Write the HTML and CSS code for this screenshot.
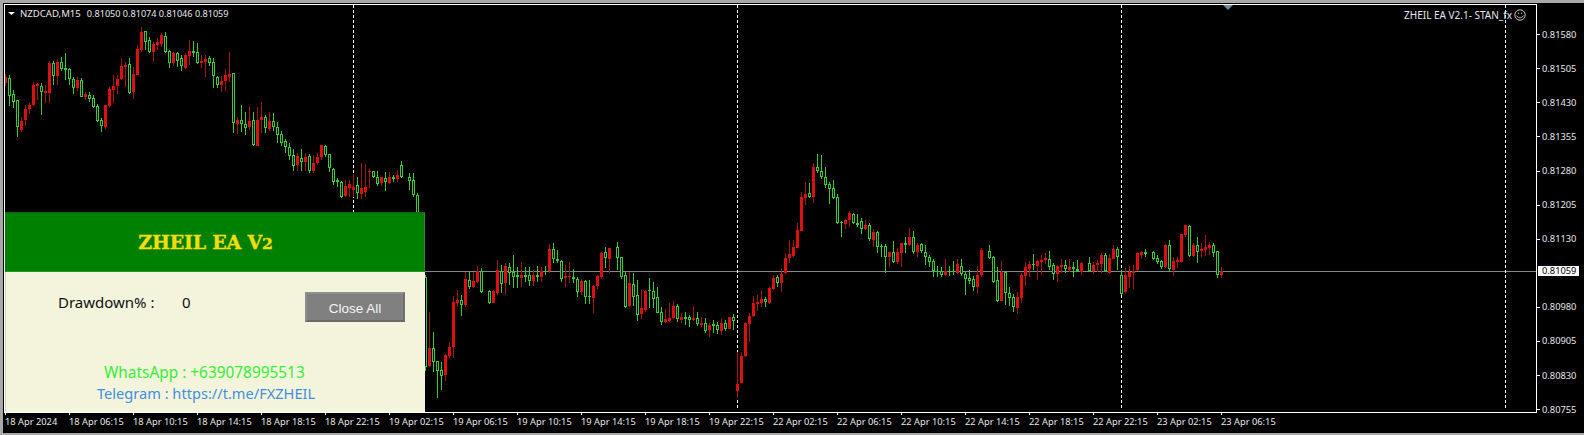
FILE: index.html
```html
<!DOCTYPE html>
<html lang="en">
<head>
<meta charset="utf-8">
<title>NZDCAD,M15 - ZHEIL EA V2</title>
<link rel="stylesheet" href="styles.css">
</head>
<body>
<main class="terminal">
  <div class="chart-row">
    <section class="plot">
      <svg class="candles" id="candles" viewBox="5 5 1531 407" width="1531" height="407" aria-label="Candlestick chart"></svg>
      <div class="legend">
        <svg class="legend-arrow" viewBox="0 0 7 3" width="7" height="3"><path d="M0 0H7L3.5 3Z"/></svg>
        <span class="legend-symbol">NZDCAD,M15</span>
        <span class="legend-ohlc">0.81050 0.81074 0.81046 0.81059</span>
      </div>
      <div class="expert">
        <span>ZHEIL EA V2.1- STAN_fx</span>
        <svg class="smiley" viewBox="0 0 12 12" width="12" height="12"><circle cx="6" cy="6" r="5.2"/><path d="M3.2 7.2C4.2 9.2 7.8 9.2 8.8 7.2M2.6 6.7 3.6 7.5M9.4 6.7 8.4 7.5"/><path d="M4.4 3.6V5M7.6 3.6V5"/></svg>
      </div>
      <svg class="shift-marker" viewBox="0 0 10 5" width="10" height="5"><path d="M0 0H10L5 5Z"/></svg>
      <aside class="panel">
        <header class="panel-head"><span>ZHEIL EA V<span class="oldstyle">2</span></span></header>
        <div class="panel-body">
          <div class="panel-row">
            <span class="dd-label">Drawdown% :</span>
            <span class="dd-value">0</span>
            <button class="close-all" type="button">Close All</button>
          </div>
          <p class="contact whatsapp">WhatsApp : +639078995513</p>
          <p class="contact telegram">Telegram : https://t.me/FXZHEIL</p>
        </div>
      </aside>
    </section>
    <div class="price-axis">
      <span class="price">0.81580</span>
      <span class="price">0.81505</span>
      <span class="price">0.81430</span>
      <span class="price">0.81355</span>
      <span class="price">0.81280</span>
      <span class="price">0.81205</span>
      <span class="price">0.81130</span>
      <span class="price current">0.81059</span>
      <span class="price">0.80980</span>
      <span class="price">0.80905</span>
      <span class="price">0.80830</span>
      <span class="price">0.80755</span>
    </div>
  </div>
  <div class="time-axis">
    <span class="time">18 Apr 2024</span>
    <span class="time">18 Apr 06:15</span>
    <span class="time">18 Apr 10:15</span>
    <span class="time">18 Apr 14:15</span>
    <span class="time">18 Apr 18:15</span>
    <span class="time">18 Apr 22:15</span>
    <span class="time">19 Apr 02:15</span>
    <span class="time">19 Apr 06:15</span>
    <span class="time">19 Apr 10:15</span>
    <span class="time">19 Apr 14:15</span>
    <span class="time">19 Apr 18:15</span>
    <span class="time">19 Apr 22:15</span>
    <span class="time">22 Apr 02:15</span>
    <span class="time">22 Apr 06:15</span>
    <span class="time">22 Apr 10:15</span>
    <span class="time">22 Apr 14:15</span>
    <span class="time">22 Apr 18:15</span>
    <span class="time">22 Apr 22:15</span>
    <span class="time">23 Apr 02:15</span>
    <span class="time">23 Apr 06:15</span>
  </div>
</main>
<script src="chart.js"></script>
</body>
</html>
```
FILE: styles.css
```css
* { box-sizing: border-box; }
html, body { margin: 0; height: 100%; background: #000; overflow: hidden; }
.terminal {
  width: 1584px;
  height: 435px;
  padding: 3px 0 2px 3px;
  background: #000;
  display: flex;
  flex-direction: column;
  box-shadow: inset 3px 3px 0 #a8a8a8, inset 0 -2px 0 #a8a8a8;
  font-family: "Noto Sans", sans-serif;
  color: #e8e8e8;
}
.chart-row { display: flex; height: 410px; padding-left: 1px; padding-top: 1px; }
.plot {
  position: relative;
  flex: none;
  width: 1533px;
  height: 409px;
  border: 1px solid #fff;
  background: #000;
}
.candles { display: block; shape-rendering: crispEdges; }
.price-line { fill: #808890; }
.grid-dash { stroke: #fff; stroke-width: 1; stroke-dasharray: 3 2; }
.wick-up, .body-up { fill: #32cd32; }
.wick-down { fill: #a81414; }
.body-down { fill: #dc1010; }
.body-hole { fill: #000; }
.legend {
  position: absolute; left: 3px; top: 2px;
  display: flex; align-items: center; height: 13px;
  line-height: 13px; white-space: nowrap;
}
.legend-arrow { fill: #fff; margin-right: 5px; }
.legend-symbol { margin-right: 6px; font-size: 9.6px; }
.legend-ohlc { font-size: 9.1px; }
.expert {
  position: absolute; right: 10px; top: 3px;
  display: flex; align-items: center; height: 14px;
  font-size: 10px; white-space: nowrap;
}
.smiley { margin-left: 2px; fill: none; stroke: #ddd; stroke-width: .9; }
.shift-marker { position: absolute; left: 1218px; top: 0; fill: #778899; }
.panel {
  position: absolute; left: 0; top: 207px;
  width: 420px; height: 200px;
  display: flex; flex-direction: column;
  background: #f4f4dc;
  border-left: 1px solid #d3d3c0;
}
.panel-head {
  height: 60px;
  display: flex; align-items: center; justify-content: center;
  background: #008000;
  border-top: 1px solid #0a6a0a;
  border-right: 1px solid #2a8a2a;
  border-bottom: 1px solid #1f9a1f;
  font-family: "DejaVu Serif", serif;
  font-weight: 700;
  font-size: 19px;
  letter-spacing: -.2px;
  -webkit-text-stroke: .35px #f4dc10;
  color: #f4dc10;
  margin-left: -1px;
  padding-right: 18px;
}
.oldstyle { font-size: .82em; }
.panel-body { flex: 1; padding: 19px 0 0; color: #111; }
.panel-row { display: flex; align-items: flex-start; padding-left: 52px; height: 31px; }
.dd-label { font-size: 15px; line-height: 22px; width: 124px; flex: none; white-space: nowrap; }
.dd-value { font-size: 15px; line-height: 22px; width: 123px; flex: none; }
.close-all {
  width: 100px; height: 30px; padding: 2px 0 0; margin-top: 1px;
  background: #808080; color: #f4f4f4;
  border: 2px solid #8f8f8f; border-bottom-color: #6a6a6a; border-right-color: #6f6f6f;
  font-family: "Liberation Sans", sans-serif; font-size: 13.5px;
}
.contact { margin: 0; line-height: 20px; white-space: nowrap; }
.whatsapp { margin-top: 41px; padding-left: 98px; color: #35ee35; font-size: 15.4px; }
.telegram { padding-left: 91px; color: #3f8fdc; font-size: 14.6px; }
.price-axis {
  flex: none; display: flex; flex-direction: column;
  padding-top: 13.2px; width: 47px;
}
.price {
  position: relative; display: flex; align-items: center;
  flex: none; height: 34.09px; padding-left: 5px;
  font-size: 9.3px; color: #e8e8e8;
}
.price::before { content: ""; position: absolute; left: 0; top: 50%; width: 3px; height: 1px; background: #fff; }
.price.current::before { display: none; }
.price.current { color: #000; margin-top: -2px; margin-bottom: 2px; background: linear-gradient(#fff, #fff) 1px center / 41px 10px no-repeat; }
.time-axis { display: flex; padding-left: 2px; height: 20px; }
.time {
  position: relative; flex: none; width: 64px; padding-top: 2px;
  font-size: 9.3px; line-height: 14px; white-space: nowrap; color: #e8e8e8;
}
.time::before { content: ""; position: absolute; left: 0; top: -1px; width: 1px; height: 3px; background: #fff; }
```
FILE: chart.js
```js
// Candles, read as: type, body top, body bottom, wick top, wick bottom (3x crop coordinates).
var SEGMENTS = [
 { start: 0, y0: 0, rows: "r232 250 222 258|g235 287 226 318|g283 305 270 325|g301 382 300 410|r362 390 350 395|r328 360 315 378|r316 328 308 342|r254 316 247 318|r252 258 248 300|g258 275 250 345|r272 278 255 308|r188 278 183 308|g190 227 182 255|r186 228 176 255|g186 207 172 212|g205 209 160 240|g208 236 205 255|g238 263 230 282|r240 263 232 272|g240 290 235 292|r282 292 275 300|g284 296 275 305|g295 322 285 325|g319 362 312 365|g361 378 355 395|r316 382 316 388|r268 318 262 320|r258 270 225 310|r236 258 225 282|r198 236 175 240|r195 200 185 260|g192 278 175 282|r222 276 200 298|r148 224 135 226|r96 150 82 155|g94 125 92 150|g120 156 112 158|r132 155 125 185|r126 134 115 150|r104 132 98 140|g108 156 97 160|g154 190 150 203|r160 190 155 198|g158 182 155 200|g175 198 165 212|r164 204 160 208|r154 168 120 195|g154 158 122 172|g156 190 130 192|r183 188 165 205|r178 186 165 232|g175 190 168 198|g185 228 175 265|g232 256 228 265|r243 256 228 276|r226 243 208 272|r222 231 156 245|g220 368 218 400|r360 372 350 402|g361 372 316 395|g373 383 335 405|r364 382 318 390|g360 436 335 438|r360 438 322 438|r352 360 306 400|g352 384 345 400|r362 386 335 392|g362 382 340 392|g380 404 365 430|g403 428 392 438|g424 442 418 460|g440 468 430 480|g466 497 448 512|r468 495 460 512|g475 485 448 512|r470 486 460 512|g468 514 462 518|r490 512 465 518|r470 490 460 495|r436 472 434 480|g438 466 436 470|g463 504 462 515|g508 546 503 555|g541 547 535 560|g547 590 543 594|r558 588 540 592|r552 565 540 590|r562 570 522 590|g556 580 530 596|r565 583 490 596|r560 576 492 590|r512 517 508 565|g514 530 512 535|g532 552 512 558|r532 550 530 558|g535 545 515 572|r532 550 516 552|g532 536 525 545|r526 538 510 545|g495 530 484 535|-|g530 542 518 570|g541 586 520 590|g586 660 580 660" },
 { start: 105, y0: 230, rows: "g140 410 135 422|r354 408 245 410|g354 395 305 425|g394 422 392 505|g420 437 395 480|r376 436 372 452|r350 378 335 385|r216 350 198 385|r211 218 180 232|g210 224 195 258|r148 226 125 232|g150 172 125 178|r154 172 125 175|r122 156 108 158|g122 185 115 188|-|g182 218 180 222|r182 218 180 220|r120 190 90 195|g122 162 105 188|r108 158 98 195|g112 128 100 165|g125 140 75 175|g135 140 110 175|r135 143 97 172|g135 140 110 155|g135 152 112 168|r135 152 120 168|g135 140 108 155|r122 140 110 155|g122 126 108 135|r58 122 42 130|g58 88 40 100|g88 92 60 100|g92 148 90 155|r138 143 105 170|r138 142 95 160|g140 148 118 158|g148 186 140 200|r152 186 148 195|g152 200 150 222|g198 202 150 222|r168 204 165 248|r138 168 135 178|r68 140 65 148|g67 83 50 115|r55 88 55 128|-|g52 83 37 120|g82 140 80 148|g136 232 125 235|r160 228 125 230|g162 200 130 228|g196 254 150 272|r235 252 180 268|r182 240 180 245|g180 184 145 235|g182 206 155 235|g202 248 170 250|g246 276 230 285|r268 276 238 278|r265 272 220 275|r228 264 212 266|g228 268 222 275|r262 270 248 280|g262 266 245 285|g260 270 255 292|r265 270 228 274|g265 282 245 288|r280 284 262 290|g278 304 265 308|r284 300 280 320|g283 288 270 310|g286 300 275 312|r280 302 268 315|g280 298 270 302|r262 297 260 298|g262 272 252 300|r462 482 365 503|r378 458 365 460|r278 378 276 380|r258 282 250 335|r220 258 198 262|r216 222 195 242|r208 218 180 232|g206 216 200 230|r174 218 172 222|r144 178 135 180|g142 158 135 170|r132 158 115 185|r84 130 68 132|r72 85 30 100|r52 78 30 82" },
 { start: 198, y0: 140, rows: "r270 323 250 325|r172 272 155 272|r163 173 125 195|g160 172 128 175|r82 172 68 188|g82 92 42 100|g92 112 45 118|g112 134 82 145|g133 146 125 192|g145 174 120 178|g172 248 162 252|g246 250 242 290|r240 252 236 268|r218 240 212 262|g221 248 218 252|g250 255 222 262|g244 268 235 282|r255 268 240 270|g256 298 250 302|r276 300 268 322|g276 320 272 338|g318 322 312 352|g319 350 312 398|r337 350 335 382|g337 366 304 370|r337 365 325 372|r310 338 308 380|g310 314 292 340|r292 315 265 318|g292 335 274 342|r316 335 310 352|g312 332 308 340|g335 352 315 375|g352 365 345 380|g362 392 358 410|g392 396 378 410|g394 404 380 412|r394 404 358 408|g392 396 378 408|g394 396 362 405|r372 400 358 402|g377 402 358 408|g402 416 395 465|g415 423 390 432|g418 442 408 452|r406 442 378 462|r330 406 325 410|-|g332 354 316 358|g352 426 348 428|g420 482 380 485|r396 482 362 484|g396 458 392 495|g458 474 440 498|g472 502 462 516|r472 504 455 522|r405 474 400 490|r380 407 365 438|r372 388 362 410|g372 376 342 390|r362 378 360 420|r360 366 345 405|r354 360 340 372|g358 380 332 390|g376 402 368 420|r378 402 375 425|r376 382 358 400|g376 388 360 398|r380 390 358 395|g381 388 365 412|g388 393 360 396|r368 396 366 405|-|g370 393 352 397|r375 393 365 402|r368 376 360 395|r344 372 340 398|g345 394 340 396|r354 398 342 402|r326 356 316 358|g327 350 322 390|g406 462 390 466|r405 456 385 462|r395 412 378 445|r392 398 375 448|r338 390 336 392|r336 345 332 358|g337 341 328 350|-|g336 356 334 360|g355 366 345 372|g363 382 360 386|r316 382 312 384|g314 386 300 395|r364 390 350 408|r360 366 350 385|r282 366 282 366|r256 284 254 292|g258 347 256 350|r316 348 308 352|g316 336 290 368|r326 332 308 352|r322 330 285 348|r315 325 306 345|g316 338 310 352|g334 404 332 414|r393 405 380 415" }
];

var svg = document.getElementById("candles");
var NS = "http://www.w3.org/2000/svg";

function add(cls, x, y, w, h) {
  var r = document.createElementNS(NS, "rect");
  r.setAttribute("class", cls);
  r.setAttribute("x", x);
  r.setAttribute("y", y);
  r.setAttribute("width", w);
  r.setAttribute("height", h);
  svg.appendChild(r);
}

add("price-line", 5, 271, 1531, 1);
[353, 737, 1121, 1505].forEach(function (x) {
  var l = document.createElementNS(NS, "line");
  l.setAttribute("class", "grid-dash");
  l.setAttribute("x1", x + 0.5);
  l.setAttribute("x2", x + 0.5);
  l.setAttribute("y1", 5);
  l.setAttribute("y2", 409);
  svg.appendChild(l);
});

SEGMENTS.forEach(function (seg) {
  seg.rows.split("|").forEach(function (row, k) {
    if (row === "-") return;
    var up = row.charAt(0) === "g";
    var v = row.slice(1).split(" ").map(function (n) { return Math.round(seg.y0 + Number(n) / 3); });
    var x = 5 + 4 * (seg.start + k);
    add(up ? "wick-up" : "wick-down", x, v[2], 1, Math.max(1, v[3] - v[2]));
    var h = Math.max(1, v[1] - v[0]);
    add(up ? "body-up" : "body-down", x - 1, v[0], 3, h);
    if (up && h > 2) add("body-hole", x, v[0] + 1, 1, h - 2);
  });
});
```
